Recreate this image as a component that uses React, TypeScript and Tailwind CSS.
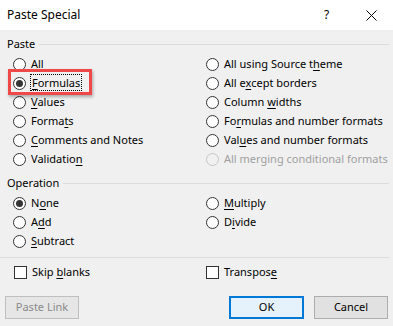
import React from "react";

type RadioProps = {
  checked?: boolean;
  disabled?: boolean;
  children: React.ReactNode;
};

function Radio({ checked, disabled, children }: RadioProps) {
  return (
    <div className="flex items-center h-[19px] whitespace-nowrap">
      <span
        className={`w-[13px] h-[13px] shrink-0 rounded-full border flex items-center justify-center ${
          disabled ? "border-[#c6c6c6] bg-[#f0f0f0]" : "border-[#333333] bg-white"
        }`}
      >
        {checked && <span className="w-[7px] h-[7px] rounded-full bg-[#333333]" />}
      </span>
      <span className={`ml-[5px] ${disabled ? "text-[#a0a0a0]" : "text-black"}`}>{children}</span>
    </div>
  );
}

function Check({ children }: { children: React.ReactNode }) {
  return (
    <div className="flex items-center h-[19px] whitespace-nowrap">
      <span className="w-[13px] h-[13px] shrink-0 border border-[#333333] bg-white" />
      <span className="ml-[5px]">{children}</span>
    </div>
  );
}

function GroupHeader({ label }: { label: string }) {
  return (
    <div className="flex items-center h-[16px] pl-[7px] pr-[4px]">
      <span>{label}</span>
      <span className="flex-1 h-px bg-[#dcdcdc] ml-[4px]" />
    </div>
  );
}

const U = ({ children }: { children: React.ReactNode }) => <span className="underline underline-offset-[2px]">{children}</span>;

export default function App() {
  return (
    <div
      className="w-[393px] h-[326px] bg-[#f0f0f0] text-[11px] text-black flex flex-col overflow-hidden"
      style={{ fontFamily: '"Segoe UI", "Noto Sans", sans-serif' }}
    >
      {/* title bar */}
      <div className="h-[30px] bg-white flex items-center pl-[7px]">
        <span className="flex-1 text-[12px]">Paste Special</span>
        <span className="w-[10px] mr-[32px] text-[12px]">?</span>
        <svg width="11" height="11" viewBox="0 0 11 11" className="mr-[16px]">
          <path d="M0.5 0.5 L10.5 10.5 M10.5 0.5 L0.5 10.5" stroke="#000" strokeWidth="1" />
        </svg>
      </div>

      <div className="pt-[6px]">
        <GroupHeader label="Paste" />
        <div className="grid grid-cols-[193px_1fr] pl-[13px] mt-[3px]">
          <div className="flex flex-col">
            <Radio>All</Radio>
            <div className="relative">
              <Radio checked>
                <span className="outline outline-1 outline-dotted outline-black px-[1px]">
                  <U>F</U>ormulas
                </span>
              </Radio>
              <div className="absolute left-[-5px] top-[-5px] w-[84px] h-[26px] border-[3px] border-[#ef4848] shadow-[1px_2px_3px_rgba(0,0,0,0.3)]" />
            </div>
            <Radio>
              <U>V</U>alues
            </Radio>
            <Radio>
              Forma<U>t</U>s
            </Radio>
            <Radio>
              <U>C</U>omments and Notes
            </Radio>
            <Radio>
              Validatio<U>n</U>
            </Radio>
          </div>
          <div className="flex flex-col">
            <Radio>
              All using Source t<U>h</U>eme
            </Radio>
            <Radio>
              All e<U>x</U>cept borders
            </Radio>
            <Radio>
              Column <U>w</U>idths
            </Radio>
            <Radio>
              Fo<U>r</U>mulas and number formats
            </Radio>
            <Radio>
              Val<U>u</U>es and number formats
            </Radio>
            <Radio disabled>All merging conditional formats</Radio>
          </div>
        </div>
      </div>

      <div className="mt-[6px]">
        <GroupHeader label="Operation" />
        <div className="grid grid-cols-[193px_1fr] pl-[13px] mt-[3px]">
          <div className="flex flex-col">
            <Radio checked>
              N<U>o</U>ne
            </Radio>
            <Radio>
              A<U>d</U>d
            </Radio>
            <Radio>
              <U>S</U>ubtract
            </Radio>
          </div>
          <div className="flex flex-col">
            <Radio>
              <U>M</U>ultiply
            </Radio>
            <Radio>
              D<U>i</U>vide
            </Radio>
          </div>
        </div>
      </div>

      <div className="h-px bg-[#dcdcdc] mt-[6px] mr-[4px]" />

      <div className="grid grid-cols-[192px_1fr] pl-[14px] mt-[5px]">
        <Check>
          Skip <U>b</U>lanks
        </Check>
        <Check>
          Transpos<U>e</U>
        </Check>
      </div>

      <div className="flex items-center mt-[14px] px-[5px]">
        <button className="w-[74px] h-[23px] border border-[#bfbfbf] bg-[#e6e6e6] text-[#8a8a8a]">
          Paste Link
        </button>
        <div className="flex-1" />
        <button className="w-[75px] h-[23px] border-2 border-[#0078d7] bg-[#e5f1fb]">OK</button>
        <button className="w-[74px] h-[23px] border border-[#adadad] bg-[#e1e1e1] ml-[10px]">Cancel</button>
      </div>
    </div>
  );
}
